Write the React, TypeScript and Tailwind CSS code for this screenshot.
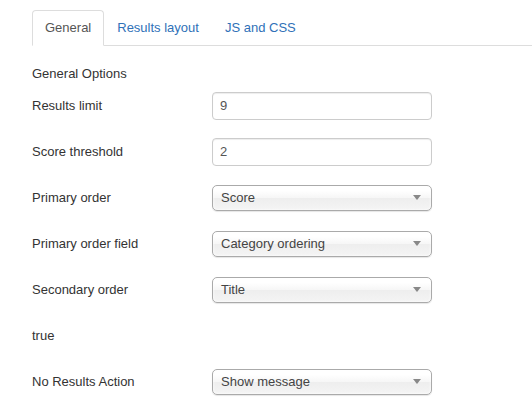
const tabs = ["General", "Results layout", "JS and CSS"]

type Row =
    | { label: string; kind: "input"; value: string }
    | { label: string; kind: "select"; value: string }
    | { label: string; kind: "text" }

const rows: Row[] = [
    { label: "Results limit", kind: "input", value: "9" },
    { label: "Score threshold", kind: "input", value: "2" },
    { label: "Primary order", kind: "select", value: "Score" },
    { label: "Primary order field", kind: "select", value: "Category ordering" },
    { label: "Secondary order", kind: "select", value: "Title" },
    { label: "true", kind: "text" },
    { label: "No Results Action", kind: "select", value: "Show message" },
]

function ChosenSelect({ value }: { value: string }) {
    return (
        <div className="w-[220px] h-[26px] -mt-[1px] flex items-center justify-between pl-[8px] pr-[10px] border border-[#aaa] rounded-[5px] bg-[linear-gradient(#ffffff_20%,#f6f6f6_50%,#eeeeee_52%,#f4f4f4_100%)] shadow-[inset_0_0_3px_#fff,0_1px_1px_rgba(0,0,0,0.1)] text-[#444]">
            <span>{value}</span>
            <svg width="8" height="5" viewBox="0 0 8 5">
                <path d="M0 0 H8 L4 5 Z" fill="#888" />
            </svg>
        </div>
    )
}

function TextInput({ value }: { value: string }) {
    return (
        <div className="w-[220px] h-[28px] flex items-center px-[7px] border border-[#ccc] rounded-[4px] bg-white shadow-[inset_0_1px_1px_rgba(0,0,0,0.075)] text-[#555]">
            {value}
        </div>
    )
}

export default function App() {
    return (
        <div className="w-[532px] h-[408px] bg-white text-[13px] leading-[18px] text-[#333] font-['Liberation_Sans',Arial,sans-serif] overflow-hidden">
            {/* Tabs */}
            <div className="pt-[10px] pl-[32px]">
                <ul className="flex border-b border-[#ddd]">
                    {tabs.map((t, i) => (
                        <li
                            key={t}
                            className={
                                i === 0
                                    ? "-mb-px px-[12px] pt-[8px] pb-[8px] border border-[#ddd] border-b-white rounded-t-[4px] bg-white text-[#555]"
                                    : "-mb-px px-[12px] pt-[8px] pb-[8px] border border-transparent text-[#3071b8]"
                            }
                        >
                            {t}
                        </li>
                    ))}
                </ul>
            </div>

            {/* Form */}
            <div className="pl-[32px] pt-[19px]">
                <div className="mb-[9px]">General Options</div>
                {rows.map((r) => (
                    <div key={r.label} className="flex items-center h-[28px] mb-[18px]">
                        <div className="w-[180px]">{r.label}</div>
                        {r.kind === "input" && <TextInput value={r.value} />}
                        {r.kind === "select" && <ChosenSelect value={r.value} />}
                    </div>
                ))}
            </div>
        </div>
    )
}
